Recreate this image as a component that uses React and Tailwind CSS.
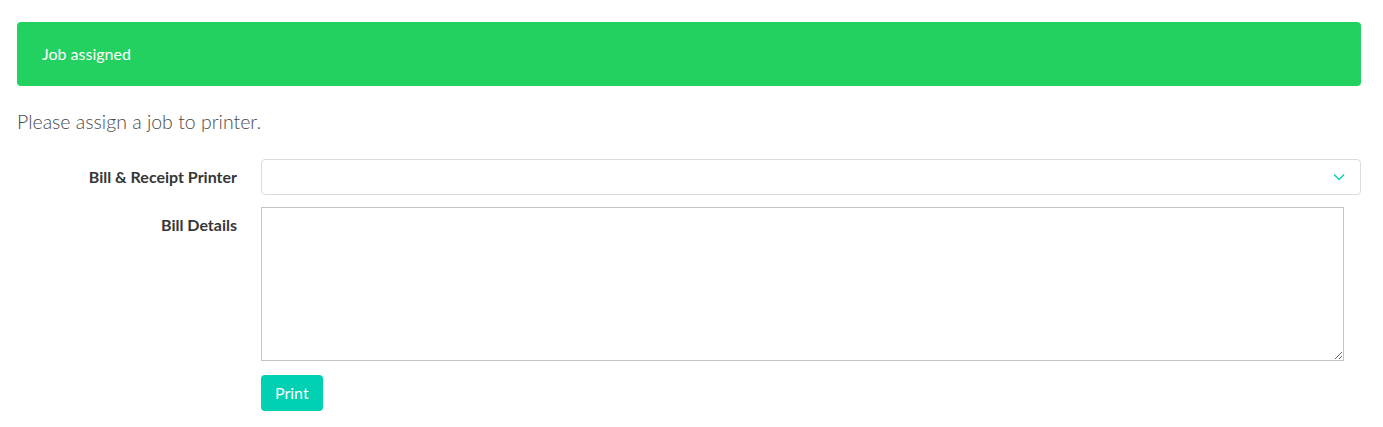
import React from 'react'

const App = () => {
  return (
    <div className="min-h-screen bg-white pl-[17px] pr-[22px] pt-[22px] font-['Lato','Open_Sans',sans-serif] text-[#4a4a4a]">
      {/* Notification */}
      <div className="flex h-[64px] items-center rounded-[4px] bg-[#23d160] px-[25px] text-[16px] text-white">
        Job assigned
      </div>

      <p className="mt-[22px] text-[19.5px] font-light leading-[28px] text-[#4a4a4a]">
        Please assign a job to printer.
      </p>

      {/* Printer field */}
      <div className="mt-[23px] flex">
        <div className="mr-[24px] w-[220px] pt-[8px] text-right text-[16px] font-bold leading-[20px] text-[#363636]">
          Bill &amp; Receipt Printer
        </div>
        <div className="relative flex-1">
          <select className="h-[36px] w-full appearance-none rounded-[4px] border border-[#dbdbdb] bg-white px-3 text-[15px]"></select>
          <svg className="pointer-events-none absolute right-[16px] top-[14px] h-[8px] w-[12px]" viewBox="0 0 12 8" fill="none" stroke="#00d1b2" strokeWidth="1.3">
            <path d="M1 1.5l5 5 5-5" />
          </svg>
        </div>
      </div>

      {/* Bill details */}
      <div className="mt-[12px] flex">
        <div className="mr-[24px] w-[220px] pt-[8px] text-right text-[16px] font-bold leading-[20px] text-[#363636]">
          Bill Details
        </div>
        <div className="flex-1">
          <textarea className="block h-[154px] w-[1083px] border border-[#c4c4c4] bg-white"></textarea>
          <button className="mt-[14px] h-[36px] rounded-[4px] bg-[#00d1b2] px-[14px] text-[16px] text-white">
            Print
          </button>
        </div>
      </div>
    </div>
  )
}

export default App
